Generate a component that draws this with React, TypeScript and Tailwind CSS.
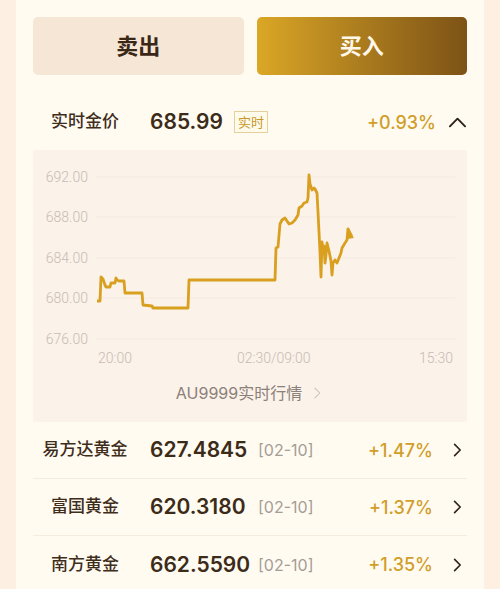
import React from 'react';

const pts: [number, number][] = [
  [97, 301], [100, 301], [101, 277], [103, 279], [105, 285], [106, 287], [110, 287], [111, 283],
  [115, 283], [116, 278], [117, 280], [119, 281], [124, 281], [125, 293], [142, 293], [143, 305],
  [152, 306], [153, 308], [188, 308], [189, 280], [275, 280], [276, 248], [278, 247], [280, 224],
  [282, 220], [285, 218], [287, 221], [289, 224], [292, 223], [295, 220], [298, 215], [299, 208],
  [302, 206], [304, 203], [307, 202], [308, 198], [309, 175], [310, 184], [312, 190], [314, 188],
  [315, 189], [317, 193], [318, 212], [319, 232], [320, 252], [321, 277], [322, 242], [323, 252],
  [324, 246], [325, 263], [326, 255], [327, 243], [329, 251], [331, 261], [332, 275], [333, 263],
  [335, 260], [337, 263], [339, 258], [341, 253], [342, 248], [345, 243], [347, 240], [348, 229],
  [350, 233], [352, 237],
];

const yLabels = [
  { v: '692.00', y: 177 },
  { v: '688.00', y: 217 },
  { v: '684.00', y: 258 },
  { v: '680.00', y: 298 },
  { v: '676.00', y: 339 },
];

const funds = [
  { name: '易方达黄金', price: '627.4845', date: '[02-10]', pct: '+1.47%' },
  { name: '富国黄金', price: '620.3180', date: '[02-10]', pct: '+1.37%' },
  { name: '南方黄金', price: '662.5590', date: '[02-10]', pct: '+1.35%' },
];

const font = { fontFamily: 'Inter, "Noto Sans CJK SC", sans-serif' };

const Chevron = ({ dir, className, width = 2 }: { dir: 'up' | 'right'; className?: string; width?: number }) => (
  <svg viewBox="0 0 20 20" className={className} fill="none" stroke="currentColor" strokeWidth={width} strokeLinecap="round" strokeLinejoin="round">
    {dir === 'up' ? <path d="M2 14 L10 6 L18 14" /> : <path d="M7 3 L14 10 L7 17" />}
  </svg>
);

const Chart = () => (
  <svg width={434} height={225} viewBox="33 150 434 225" className="block">
    {yLabels.map((l) => (
      <g key={l.v}>
        <line x1={96} x2={455} y1={l.y} y2={l.y} stroke="#f4eae0" strokeWidth={1} />
        <text x={88} y={l.y + 5} textAnchor="end" fontSize={14} fill="#c8bcb4" fontFamily="Roboto, sans-serif" fontWeight={300}>
          {l.v}
        </text>
      </g>
    ))}
    <polyline
      points={pts.map((p) => p.join(',')).join(' ')}
      fill="none"
      stroke="#d99f1f"
      strokeWidth={2.8}
      strokeLinejoin="round"
    />
    <polygon points="348,231 354,238 347,239" fill="#d99f1f" />
    <g fontSize={14} fill="#c8bcb4" fontFamily="Roboto, sans-serif" fontWeight={300}>
      <text x={98} y={363}>20:00</text>
      <text x={237} y={363}>02:30/09:00</text>
      <text x={453} y={363} textAnchor="end">15:30</text>
    </g>
  </svg>
);

export default function App() {
  return (
    <div className="w-[500px] h-[589px] overflow-hidden bg-[#fdf0e2] px-4" style={font}>
      <div className="h-full bg-[#fffbf1] px-[17px]">
        <div className="flex gap-[13px] pt-[17px]">
          <button className="flex-1 h-[58px] rounded-[5px] bg-[#f5e6d6] text-[22px] font-bold text-[#3a2716]">卖出</button>
          <button className="flex-1 h-[58px] rounded-[5px] bg-gradient-to-r from-[#dba726] to-[#7d5316] text-[22px] font-bold text-[#fff8e8]">
            买入
          </button>
        </div>

        <div className="flex items-center h-[56px] mt-[19px]">
          <div className="w-[104px] text-center text-[17px] font-medium text-[#3f2d1c]">实时金价</div>
          <div className="ml-[13px] text-[21px] font-semibold text-[#3d2b1a]">685.99</div>
          <div className="ml-[11px] h-[22px] px-[3px] border border-[#e5cf9c] bg-[#fffbea] text-[13px] leading-[20px] text-[#c9962b]">实时</div>
          <div className="ml-auto text-[18px] font-medium text-[#d19e2a]">+0.93%</div>
          <Chevron dir="up" className="w-[19px] h-[19px] ml-[12px] text-[#2e2116]" />
        </div>

        <div className="bg-[#fbf2e9] rounded-[2px]">
          <Chart />
          <div className="h-[47px] pt-[8px] flex justify-center items-start">
            <div className="flex items-center text-[16px] leading-[20px] text-[#8b807a]">
              AU9999实时行情
              <Chevron dir="right" width={1.5} className="w-[14px] h-[16px] ml-[8px] text-[#c9c0b9]" />
            </div>
          </div>
        </div>

        {funds.map((f, i) => (
          <div key={f.name} className={`flex items-center h-[57px] ${i < funds.length - 1 ? 'border-b border-[#f5ece0]' : ''}`}>
            <div className="w-[104px] text-center text-[17px] font-medium text-[#3f2d1c]">{f.name}</div>
            <div className="ml-[13px] w-[108px] text-[21px] font-semibold text-[#3d2b1a]">{f.price}</div>
            <div className="text-[16px] text-[#a59d97]">{f.date}</div>
            <div className="ml-auto text-[18px] font-medium text-[#d19e2a]">{f.pct}</div>
            <Chevron dir="right" className="w-[16px] h-[18px] ml-[16px] mr-[2px] text-[#2e2116]" />
          </div>
        ))}
      </div>
    </div>
  );
}
